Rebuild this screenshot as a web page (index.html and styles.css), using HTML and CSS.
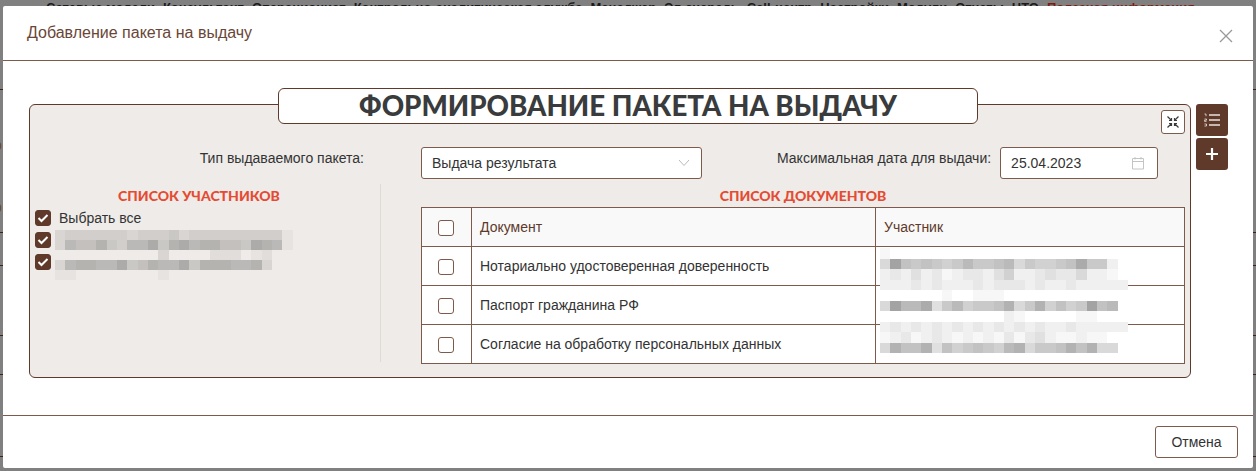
FILE: index.html
```html
<!DOCTYPE html>
<html lang="ru">
<head>
	<meta charset="UTF-8">
	<meta name="viewport" content="width=device-width, initial-scale=1.0">
	<title>Добавление пакета на выдачу</title>
	<link rel="stylesheet" href="styles.css">
</head>
<body>
	<!-- page behind the modal -->
	<div class="backdrop">
		<div class="page-row page-row-nav">
			<nav class="top-nav">
				<span>Сетевые модели</span>
				<span>Консультант</span>
				<span>Операционист</span>
				<span>Контрольно-аналитическая служба</span>
				<span>Менеджер</span>
				<span>Эл.очередь</span>
				<span>Call-центр</span>
				<span>Настройки</span>
				<span>Модули</span>
				<span>Отчеты</span>
				<span>НТО</span>
				<span class="top-nav-red">Полезная информация</span>
			</nav>
		</div>
		<div class="page-row page-row-a">
			<span class="page-stub">р</span>
			<span class="page-stub">р</span>
		</div>
		<div class="page-row page-row-b"></div>
		<div class="page-row page-row-c"></div>
		<div class="page-row page-row-d"></div>
		<div class="page-row page-row-e"></div>
		<h2 class="page-heading">СПИСОК ПАКЕТОВ ДЛЯ ВЫДАЧИ</h2>
	</div>

	<div class="modal">
		<header class="modal-header">
			<span class="modal-title">Добавление пакета на выдачу</span>
			<svg class="modal-close" width="14" height="14" viewBox="0 0 14 14">
				<path d="M1 1 L13 13 M13 1 L1 13" stroke="#999" stroke-width="1.3" fill="none"/>
			</svg>
		</header>

		<div class="modal-body">
			<div class="panel-wrap">
				<section class="panel">
					<h1 class="panel-title">ФОРМИРОВАНИЕ ПАКЕТА НА ВЫДАЧУ</h1>
					<button class="expand-btn">
						<svg width="12" height="12" viewBox="0 0 12 12" fill="none" stroke="#3c3c3c" stroke-width="1.2">
							<path d="M0.5 0.5 L4.5 4.5 M4.5 2 V4.5 H2 M11.5 0.5 L7.5 4.5 M7.5 2 V4.5 H10 M0.5 11.5 L4.5 7.5 M4.5 10 V7.5 H2 M11.5 11.5 L7.5 7.5 M7.5 10 V7.5 H10"/>
						</svg>
					</button>

					<div class="form-row">
						<label class="form-label form-label-type">Тип выдаваемого пакета:</label>
						<div class="field field-select">
							<span>Выдача результата</span>
							<svg width="12" height="8" viewBox="0 0 12 8">
								<path d="M1 1 L6 6.5 L11 1" stroke="#bbb" stroke-width="1" fill="none"/>
							</svg>
						</div>
						<label class="form-label form-label-date">Максимальная дата для выдачи:</label>
						<div class="field field-date">
							<span>25.04.2023</span>
							<svg width="14" height="14" viewBox="0 0 14 14" fill="none" stroke="#c4c4c4" stroke-width="1">
								<path d="M1.5 2.5 H12.5 V13 H1.5 Z M1.5 5.5 H12.5 M4 1 V3.5 M10 1 V3.5"/>
							</svg>
						</div>
					</div>

					<div class="columns">
						<div class="col-members">
							<h3 class="list-heading">СПИСОК УЧАСТНИКОВ</h3>
							<label class="member"><span class="check check-on"><svg width="12" height="10" viewBox="0 0 12 10"><path d="M1.5 5 L4.5 8 L10.5 2" stroke="#fff" stroke-width="2" fill="none"/></svg></span>Выбрать все</label>
							<label class="member"><span class="check check-on"><svg width="12" height="10" viewBox="0 0 12 10"><path d="M1.5 5 L4.5 8 L10.5 2" stroke="#fff" stroke-width="2" fill="none"/></svg></span></label>
							<label class="member"><span class="check check-on"><svg width="12" height="10" viewBox="0 0 12 10"><path d="M1.5 5 L4.5 8 L10.5 2" stroke="#fff" stroke-width="2" fill="none"/></svg></span></label>
							<div class="blur blur-members" data-base="#eeebe8" data-w="10.33" data-h="10" data-rows="34444443444534444444441,37668547795897886659871,00000000003000022201200,37887795687795888778300,11000000001000000000000"></div>
						</div>
						<div class="col-docs">
							<h3 class="list-heading">СПИСОК ДОКУМЕНТОВ</h3>
							<table class="docs">
								<thead>
									<tr><th class="cell-check"><span class="check"></span></th><th class="cell-doc">Документ</th><th>Участник</th></tr>
								</thead>
								<tbody>
									<tr><td class="cell-check"><span class="check"></span></td><td class="cell-doc">Нотариально удостоверенная доверенность</td><td></td></tr>
									<tr><td class="cell-check"><span class="check"></span></td><td class="cell-doc">Паспорт гражданина РФ</td><td></td></tr>
									<tr><td class="cell-check"><span class="check"></span></td><td class="cell-doc">Согласие на обработку персональных данных</td><td></td></tr>
								</tbody>
							</table>
							<div class="blur blur-docs" data-base="#fff" data-w="10.33" data-h="10.5" data-rows="100000000000000000000000,5C87876797789576678B7720,232423123324622343352210,222323222323332322322222,000000100111000000000000,5C99B4796778A57A6867C890,000000000000210000011000,232323232323232322322222,123123212121313421121100,5A88A48678769A5778A8A550"></div>
						</div>
					</div>
				</section>

				<div class="side-btns">
					<button class="side-btn">
						<svg width="16" height="14" viewBox="0 0 16 14" fill="none" stroke="#e9e2de">
							<path d="M5 2 H16 M5 7 H16 M5 12 H16" stroke-width="1.3"/>
							<path d="M0.5 1 H2 V3.2 M0.5 6 H2.5 V7.2 H0.5 V8.4 H2.5 M0.5 11 H2.5 V13 H0.5" stroke-width="0.8"/>
						</svg>
					</button>
					<button class="side-btn">
						<svg width="14" height="14" viewBox="0 0 14 14">
							<path d="M7 1 V13 M1 7 H13" stroke="#fff" stroke-width="2.2" fill="none"/>
						</svg>
					</button>
				</div>
			</div>
		</div>

		<footer class="modal-footer">
			<button class="cancel-btn">Отмена</button>
		</footer>
	</div>

	<script src="blur.js"></script>
</body>
</html>
```

FILE: styles.css
```css
* {
	box-sizing: border-box;
}
html, body {
	margin: 0;
	height: 100%;
	overflow: hidden;
}
body {
	background-color: #808080;
	font-family: "Liberation Sans", Arial, sans-serif;
	font-size: 14px;
	color: #333;
}

/* page behind */
.backdrop {
	height: 471px;
	overflow: hidden;
}
.page-row {
	border-bottom: 1px solid #3a2318;
}
.page-row-nav { height: 90px; }
.page-row-a { height: 143px; padding-top: 48px; display: flex; flex-direction: column; gap: 48px; }
.page-row-b { height: 33px; }
.page-row-c { height: 70px; }
.page-row-d { height: 39px; }
.page-row-e { height: 82px; }
.page-stub {
	height: 14px;
	line-height: 14px;
	margin-left: -6px;
	color: #6b4a1a;
}
.top-nav {
	display: flex;
	gap: 8px;
	padding-left: 46px;
	padding-top: 1px;
	font-weight: bold;
	font-size: 13px;
	line-height: 14px;
	color: #1a1a1a;
	white-space: nowrap;
}
.top-nav-red {
	color: #7c1c10;
}
.page-heading {
	margin: 10px 0 0 397px;
	font-family: Lato, "Liberation Sans", sans-serif;
	font-weight: 900;
	font-size: 16px;
	line-height: 20px;
	color: #7a2014;
}

/* modal */
.modal {
	position: absolute;
	left: 3px;
	top: 6px;
	width: 1250px;
	height: 462px;
	background-color: #fff;
	border-radius: 2px;
	display: flex;
	flex-direction: column;
}
.modal-header {
	height: 55px;
	border-bottom: 1px solid #7d5a4c;
	display: flex;
	align-items: center;
	justify-content: space-between;
	padding: 0 20px 0 24px;
	flex-shrink: 0;
}
.modal-title {
	font-size: 16px;
	color: #6a4636;
	padding-bottom: 1px;
}
.modal-close {
	margin-top: 6px;
}
.modal-body {
	flex: 1;
	padding: 43px 0 0 26px;
}
.modal-footer {
	height: 53px;
	border-top: 1px solid #7d5a4c;
	display: flex;
	justify-content: flex-end;
	align-items: flex-start;
	padding: 10px 15px 0 0;
	flex-shrink: 0;
}
.cancel-btn {
	width: 83px;
	height: 32px;
	background-color: #fff;
	border: 1px solid #7d5a4c;
	border-radius: 3px;
	font-family: inherit;
	font-size: 14px;
	color: #333;
}

/* panel */
.panel-wrap {
	display: flex;
	align-items: flex-start;
	gap: 5px;
}
.panel {
	position: relative;
	width: 1162px;
	height: 274px;
	background-color: #eeebe8;
	border: 1px solid #5f3a2b;
	border-radius: 6px;
	padding: 42px 5px 0;
}
.panel-title {
	position: absolute;
	left: 248px;
	top: -17px;
	width: 700px;
	height: 36px;
	margin: 0;
	background-color: #fff;
	border: 1px solid #5f3a2b;
	border-radius: 6px;
	font-family: Lato, "Liberation Sans", sans-serif;
	font-weight: 900;
	font-size: 27.7px;
	line-height: 34px;
	text-align: center;
	color: #393b3d;
}
.expand-btn {
	position: absolute;
	right: 5px;
	top: 5px;
	width: 24px;
	height: 24px;
	padding: 0;
	display: flex;
	align-items: center;
	justify-content: center;
	background-color: #fff;
	border: 1px solid #7d5a4c;
	border-radius: 3px;
}
.side-btns {
	display: flex;
	flex-direction: column;
	gap: 2px;
}
.side-btn {
	width: 32px;
	height: 32px;
	padding: 0;
	display: flex;
	align-items: center;
	justify-content: center;
	background-color: #5f3a2b;
	border: none;
	border-radius: 3px;
}

/* form */
.form-row {
	display: flex;
	align-items: center;
	height: 32px;
}
.form-label {
	white-space: nowrap;
	padding-bottom: 10px;
}
.form-label-type {
	width: 329px;
	text-align: right;
	margin-right: 57px;
}
.form-label-date {
	margin-left: 75px;
	margin-right: 9px;
}
.field {
	height: 32px;
	background-color: #fff;
	border: 1px solid #7d5a4c;
	border-radius: 3px;
	display: flex;
	align-items: center;
	justify-content: space-between;
	padding: 0 11px 0 10px;
	color: #333;
}
.field-select {
	width: 281px;
}
.field-date {
	width: 158px;
	padding-right: 12px;
}

/* columns */
.columns {
	display: flex;
	gap: 40px;
	margin-top: 5px;
}
.col-members {
	position: relative;
	width: 346px;
	height: 178px;
	border-right: 1px solid #dedad6;
}
.col-docs {
	position: relative;
	width: 764px;
}
.list-heading {
	margin: 0;
	height: 23px;
	font-family: Lato, "Liberation Sans", sans-serif;
	font-weight: 900;
	font-size: 14px;
	line-height: 24px;
	text-align: center;
	color: #e54b33;
}
.col-members .list-heading {
	padding-right: 17px;
}
.member {
	display: flex;
	align-items: center;
	gap: 8px;
	height: 16px;
	margin-top: 3px;
	margin-bottom: 6px;
	line-height: 16px;
}
.check {
	display: inline-flex;
	align-items: center;
	justify-content: center;
	width: 16px;
	height: 16px;
	background-color: #fff;
	border: 1px solid #7d5a4c;
	border-radius: 3px;
	vertical-align: middle;
}
.check-on {
	background-color: #5f3a2b;
	border-color: #5f3a2b;
}

/* table */
.docs {
	width: 764px;
	height: 157px;
	border-collapse: collapse;
	table-layout: fixed;
	background-color: #fff;
}
.docs th, .docs td {
	height: 39px;
	padding: 0 8px;
	border: 1px solid #7d5a4c;
	text-align: left;
	font-weight: normal;
}
.docs th {
	background-color: #f9f9f9;
	color: #60392b;
}
.docs .cell-check {
	width: 50px;
	padding: 0 1px 0 0;
	text-align: center;
}
.docs .cell-doc {
	width: 404px;
}

/* censored text blocks */
.blur {
	position: absolute;
	line-height: 0;
}
.blur-members {
	left: 20px;
	top: 46px;
}
.blur-docs {
	left: 459px;
	top: 64px;
}
```

FILE: blur.js
```js
// draw the pixelated names from rows of darkness digits
var blurBlocks = document.querySelectorAll('.blur');

for (var i = 0; i < blurBlocks.length; i++) {
	var block = blurBlocks[i];
	var rows = block.dataset.rows.split(',');
	var cellW = parseFloat(block.dataset.w);
	var cellH = parseFloat(block.dataset.h);
	var width = rows[0].length * cellW;
	var height = rows.length * cellH;
	var svg = `<svg width="${width}" height="${height}" shape-rendering="crispEdges">`;
	svg += `<rect width="${width}" height="${height}" fill="${block.dataset.base}"/>`;

	for (var r = 0; r < rows.length; r++) {
		for (var c = 0; c < rows[r].length; c++) {
			var level = parseInt(rows[r][c], 16);
			if (level > 0) {
				svg += `<rect x="${c * cellW}" y="${r * cellH}" width="${cellW}" height="${cellH}" fill="#000" fill-opacity="${level * 0.03}"/>`;
			}
		}
	}
	block.innerHTML = svg + '</svg>';
}
```
